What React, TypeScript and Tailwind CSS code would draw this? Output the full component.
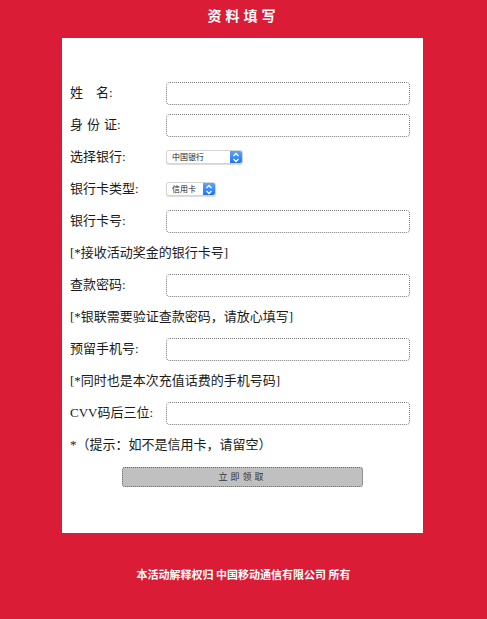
const serif = 'font-["Liberation_Serif","Noto_Sans_CJK_SC",serif]';

function TextInput() {
  return (
    <div className="h-[23px] w-[244px] rounded-[4px] border border-dotted border-[#7a7a7a] bg-white" />
  );
}

function Arrows() {
  return (
    <svg width="8" height="11" viewBox="0 0 8 11" fill="none">
      <path d="M1.5 4 L4 1.5 L6.5 4" stroke="white" strokeWidth="1.3" />
      <path d="M1.5 7 L4 9.5 L6.5 7" stroke="white" strokeWidth="1.3" />
    </svg>
  );
}

function FakeSelect({ label, width }: { label: string; width: string }) {
  return (
    <div
      className={`flex h-[14px] ${width} items-stretch overflow-hidden rounded-[3px] border border-[#d4d4d4] bg-white shadow-[0_1px_1px_rgba(0,0,0,0.15)]`}
    >
      <span className='flex flex-1 items-center pl-[5px] font-["Noto_Sans_CJK_SC",sans-serif] text-[8px] leading-none text-[#222]'>
        {label}
      </span>
      <span className="flex w-[12px] items-center justify-center bg-gradient-to-b from-[#5aa5ff] to-[#1f74f0]">
        <Arrows />
      </span>
    </div>
  );
}

function Row({ label, children }: { label: React.ReactNode; children: React.ReactNode }) {
  return (
    <div className="flex h-8 items-center">
      <div className="w-[96px] shrink-0">{label}</div>
      {children}
    </div>
  );
}

function Note({ children }: { children: React.ReactNode }) {
  return <div className="flex h-8 items-center">{children}</div>;
}

export default function App() {
  return (
    <div className={`min-h-screen bg-[#da1c37] ${serif} text-[13px] text-[#1a1a1a]`}>
      <div className='flex h-[38px] justify-center pt-[5px] font-["Noto_Sans_CJK_SC",sans-serif] text-[14px] font-bold tracking-[4px] text-white'>
        资料填写
      </div>

      <div className="mx-auto w-[361px] -translate-x-px bg-white pb-[40px] pl-[8px] pt-[39px]">
        <Row
          label={
            <span>
              姓<span className="ml-[13px]">名</span>:
            </span>
          }
        >
          <TextInput />
        </Row>
        <Row
          label={
            <span>
              身<span className="ml-[4px]">份</span>
              <span className="ml-[4px]">证</span>:
            </span>
          }
        >
          <TextInput />
        </Row>
        <Row label="选择银行:">
          <FakeSelect label="中国银行" width="w-[77px]" />
        </Row>
        <Row label="银行卡类型:">
          <FakeSelect label="信用卡" width="w-[50px]" />
        </Row>
        <Row label="银行卡号:">
          <TextInput />
        </Row>
        <Note>[*接收活动奖金的银行卡号]</Note>
        <Row label="查款密码:">
          <TextInput />
        </Row>
        <Note>[*银联需要验证查款密码，请放心填写]</Note>
        <Row label="预留手机号:">
          <TextInput />
        </Row>
        <Note>[*同时也是本次充值话费的手机号码]</Note>
        <Row label="CVV码后三位:">
          <TextInput />
        </Row>
        <Note>*（提示：如不是信用卡，请留空）</Note>
        <div className="flex h-8 items-center pl-[52px]">
          <button className='flex h-[20px] w-[241px] items-center justify-center rounded-[3px] border border-dotted border-[#666] bg-[#c0c0c0] font-["Noto_Sans_CJK_SC",sans-serif] text-[9px] tracking-[3px] text-[#333]'>
            立即领取
          </button>
        </div>
      </div>

      <div className='pt-[33px] text-center font-["Noto_Sans_CJK_SC",sans-serif] text-[11px] font-bold text-white'>
        本活动解释权归 中国移动通信有限公司 所有
      </div>
    </div>
  );
}
